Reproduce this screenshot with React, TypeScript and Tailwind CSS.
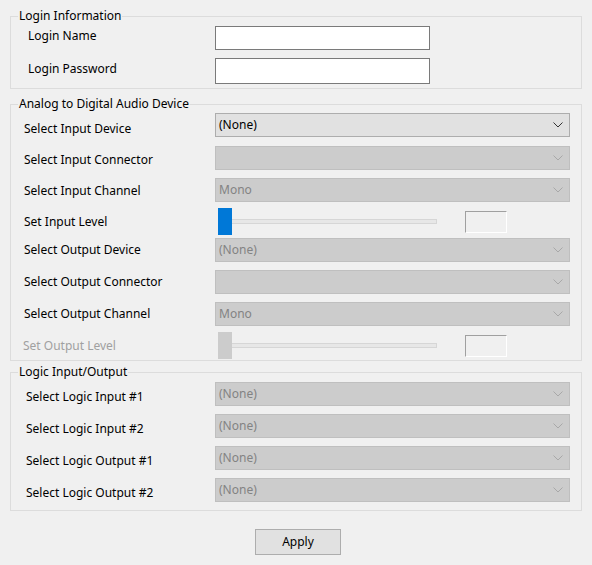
import React from "react";

const font = { fontFamily: '"Segoe UI", "Noto Sans", "Liberation Sans", sans-serif' };

function Chevron({ disabled }: { disabled?: boolean }) {
  return (
    <svg width="10" height="6" viewBox="0 0 10 6" className="absolute right-[6px] top-1/2 -translate-y-1/2">
      <path d="M0.5 0.5 L5 5 L9.5 0.5" fill="none" stroke={disabled ? "#a8a8a8" : "#333"} strokeWidth="1" />
    </svg>
  );
}

function Select({ value, disabled, mt }: { value?: string; disabled?: boolean; mt: string }) {
  return (
    <div
      className={`relative w-[355px] h-[24px] border flex items-center pl-[3px] text-[12px] ${mt} ${
        disabled ? "bg-[#cccccc] border-[#bfbfbf] text-[#838383]" : "bg-[#e1e1e1] border-[#adadad] text-black"
      }`}
    >
      {value}
      <Chevron disabled={disabled} />
    </div>
  );
}

function Row({ label, labelPad, children, mt, disabled }: { label: string; labelPad: string; children: React.ReactNode; mt: string; disabled?: boolean }) {
  return (
    <div className={`flex items-center ${mt}`}>
      <div className={`w-[204px] text-[12px] ${labelPad} ${disabled ? "text-[#a0a0a0]" : "text-black"}`}>{label}</div>
      {children}
    </div>
  );
}

function Slider({ disabled }: { disabled?: boolean }) {
  return (
    <div className="flex items-center h-[27px]">
      <div className="relative w-[219px] h-[27px] ml-[3px]">
        <div className="absolute left-0 right-0 top-[11px] h-[5px] bg-[#e7e7e7] border border-[#d6d6d6]" />
        <div className={`absolute left-0 top-0 w-[14px] h-[27px] ${disabled ? "bg-[#cccccc]" : "bg-[#0078d7]"}`} />
      </div>
      <div className="ml-[28px] w-[42px] h-[22px] border border-t-[#a0a0a0] border-l-[#a0a0a0] border-b-white border-r-white bg-[#f0f0f0]" />
    </div>
  );
}

function Group({ title, children, className }: { title: string; children: React.ReactNode; className: string }) {
  return (
    <div className={`relative mx-[10px] w-[572px] border border-[#dcdcdc] ${className}`}>
      <div className="absolute -top-[9px] left-[7px] bg-[#f0f0f0] px-[1px] text-[12px] leading-[16px] text-black">{title}</div>
      {children}
    </div>
  );
}

export default function App() {
  return (
    <div className="w-[592px] h-[565px] bg-[#f0f0f0] pt-[16px] overflow-hidden" style={font}>
      <Group title="Login Information" className="pb-[4px]">
        <Row label="Login Name" labelPad="pl-[17px] -mt-[4px]" mt="mt-[9px]">
          <div className="w-[215px] h-[24px] bg-white border border-[#7a7a7a]" />
        </Row>
        <Row label="Login Password" labelPad="pl-[17px] -mt-[4px]" mt="mt-[8px]">
          <div className="w-[215px] h-[26px] bg-white border border-[#7a7a7a]" />
        </Row>
      </Group>

      <Group title="Analog to Digital Audio Device" className="mt-[15px] pb-[1px]">
        <Row label="Select Input Device" labelPad="pl-[13px] pt-[8px]" mt="mt-[7px]">
          <Select value="(None)" mt="" />
        </Row>
        <Row label="Select Input Connector" labelPad="pl-[13px] pt-[4px]" mt="mt-[8px]">
          <Select disabled mt="" />
        </Row>
        <Row label="Select Input Channel" labelPad="pl-[13px] pt-[2px]" mt="mt-[8px]">
          <Select value="Mono" disabled mt="" />
        </Row>
        <Row label="Set Input Level" labelPad="pl-[13px]" mt="mt-[6px]">
          <Slider />
        </Row>
        <Row label="Select Output Device" labelPad="pl-[13px]" mt="mt-[3px]">
          <Select value="(None)" disabled mt="" />
        </Row>
        <Row label="Select Output Connector" labelPad="pl-[13px]" mt="mt-[8px]">
          <Select disabled mt="" />
        </Row>
        <Row label="Select Output Channel" labelPad="pl-[13px]" mt="mt-[8px]">
          <Select value="Mono" disabled mt="" />
        </Row>
        <Row label="Set Output Level" labelPad="pl-[12px]" mt="mt-[6px]" disabled>
          <Slider disabled />
        </Row>
      </Group>

      <Group title="Logic Input/Output" className="mt-[11px] pb-[8px]">
        <Row label="Select Logic Input #1" labelPad="pl-[15px] pt-[6px]" mt="mt-[9px]">
          <Select value="(None)" disabled mt="" />
        </Row>
        <Row label="Select Logic Input #2" labelPad="pl-[15px] pt-[6px]" mt="mt-[8px]">
          <Select value="(None)" disabled mt="" />
        </Row>
        <Row label="Select Logic Output #1" labelPad="pl-[15px] pt-[6px]" mt="mt-[8px]">
          <Select value="(None)" disabled mt="" />
        </Row>
        <Row label="Select Logic Output #2" labelPad="pl-[15px] pt-[6px]" mt="mt-[8px]">
          <Select value="(None)" disabled mt="" />
        </Row>
      </Group>

      <div className="mt-[18px] flex">
        <button className="ml-[255px] w-[86px] h-[26px] bg-[#e1e1e1] border border-[#adadad] text-[12px] text-black">Apply</button>
      </div>
    </div>
  );
}
